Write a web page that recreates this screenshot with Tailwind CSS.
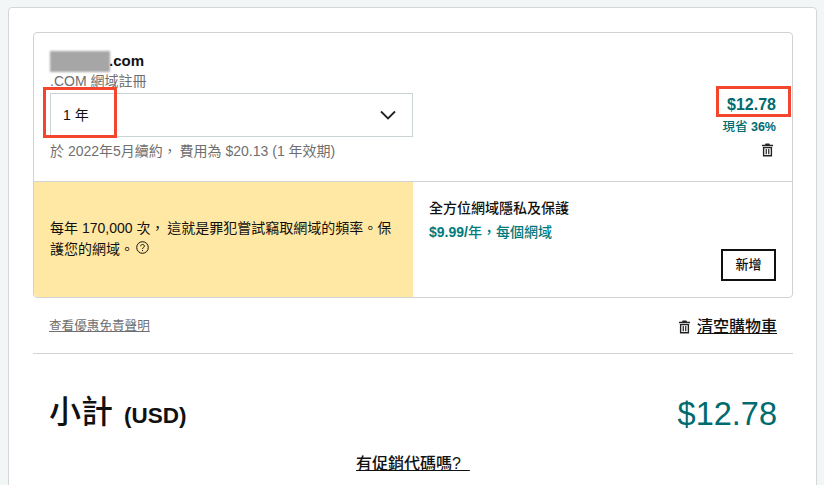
<!DOCTYPE html>
<html lang="zh-Hant">
  <head>
    <meta charset="UTF-8" />
    <script src="https://cdn.jsdelivr.net/npm/@tailwindcss/browser@4"></script>
    <title>購物車</title>
  </head>
  <body class="bg-[#f3f6f7] h-[485px] overflow-hidden font-['Liberation_Sans','Noto_Sans_CJK_SC',sans-serif] text-[#111]">
    <div class="ml-2 mr-[7px] mt-[7px] h-[490px] bg-white border border-[#d4d7d8] rounded pl-6 pr-[23px] pt-6">
      <!-- cart item -->
      <div class="relative border border-[#d0d3d4] rounded h-[266px] flex flex-col">
        <div class="h-[149px] flex justify-between pl-4 pr-4 border-b border-[#d0d3d4]">
          <div class="w-[363px]">
            <div class="flex items-center h-5 mt-[18px] text-[15px] leading-5 font-bold">
              <span class="w-[60px] h-[21px] bg-[#a6a6a6] blur-[1px]"></span>
              <span class="-ml-px">.com</span>
            </div>
            <p class="text-sm leading-5 text-[#6f6f6f]">.COM 網域註冊</p>
            <div class="mt-[2px] h-[44px] border border-[#ccd3d6] flex items-center justify-between pl-3 pr-4 text-sm">
              <span>1 年</span>
              <svg width="16" height="10" viewBox="0 0 16 10" fill="none" stroke="#222" stroke-width="1.8"><path d="M1 1.500l7 7 7-7" /></svg>
            </div>
            <p class="text-sm leading-5 text-[#6f6f6f] mt-1">於 2022年5月續約，&thinsp;費用為 $20.13 (1 年效期)</p>
          </div>
          <div class="flex flex-col items-end pt-[62px]">
            <p class="text-base leading-5 font-bold text-[#006b6e]">$12.78</p>
            <p class="text-[12.500px] leading-4 font-medium text-[#006b6e] mt-[4px]"><span>現省</span> <span class="font-bold">36%</span></p>
            <svg class="mt-[8px] mr-[3px]" width="11" height="14" viewBox="0 0 12 14" fill="#222"><path d="M4 0h4l.7 1.200H12v1.600H0V1.200h3.300zM1 3.600h10V14H1zM2.500 5v7.500h7V5zM4 6h1.300v5.500H4zM6.700 6H8v5.500H6.700z" fill-rule="evenodd" /></svg>
          </div>
        </div>
        <div class="flex-1 flex">
          <div class="w-[379px] bg-[#ffe8a3] rounded-bl pl-4 pr-3 flex items-center">
            <p class="text-sm leading-[21px]">每年 170,000 次，&thinsp;這就是罪犯嘗試竊取網域的頻率。保護您的網域。<svg class="inline ml-[2px] mb-[7px]" width="13" height="13" viewBox="0 0 13 13" fill="none" stroke="#111"><circle cx="6.500" cy="6.500" r="5.800" /><path d="M4.700 5.200c0-2.300 3.700-2.300 3.700-.1 0 1.400-1.900 1.300-1.900 2.900" /><path d="M6.500 9v1" /></svg></p>
          </div>
          <div class="flex-1 pl-4 pr-4 flex flex-col">
            <p class="text-sm leading-5 font-medium mt-4">全方位網域隱私及保護</p>
            <p class="text-sm leading-4 font-medium text-[#007a7d] mt-[6px]"><span class="font-bold">$9.99/</span>年，每個網域</p>
            <div class="flex justify-end mt-[9px]">
              <button class="w-[55px] h-8 border-2 border-[#111] text-[13px] font-medium">新增</button>
            </div>
          </div>
        </div>
        <!-- red annotations -->
        <div class="absolute left-[9px] top-[54px] w-[74px] h-[51px] border-[3px] border-[#f4462f] blur-[0.4px]"></div>
        <div class="absolute left-[682px] top-[53px] w-[75px] h-[31px] border-[3px] border-[#f4462f] blur-[0.4px]"></div>
      </div>

      <div class="flex justify-between items-center h-[27px] mt-[15px] pl-4 pr-4">
        <a class="text-[12.600px] text-[#6f6f6f] underline">查看優惠免責聲明</a>
        <a class="flex items-center gap-[7px] text-base font-medium">
          <svg width="11" height="14" viewBox="0 0 12 14" fill="#222"><path d="M4 0h4l.7 1.200H12v1.600H0V1.200h3.300zM1 3.600h10V14H1zM2.500 5v7.500h7V5zM4 6h1.300v5.500H4zM6.700 6H8v5.500H6.700z" fill-rule="evenodd" /></svg>
          <span class="underline">清空購物車</span>
        </a>
      </div>

      <div class="border-t border-[#d0d3d4] mt-[13px]"></div>

      <div class="flex justify-between items-center mt-[38px] h-[44px] pl-4 pr-4">
        <p class="font-medium text-[32px] leading-[44px]">小計 <span class="text-[22.500px] font-bold ml-[2px]">(USD)</span></p>
        <p class="text-[32.500px] leading-[44px] text-[#006b6e]">$12.78</p>
      </div>

      <p class="text-center mt-[18px] text-base leading-5 font-medium"><a class="underline">有促銷代碼嗎?&nbsp;&nbsp;</a></p>
    </div>
  </body>
</html>
